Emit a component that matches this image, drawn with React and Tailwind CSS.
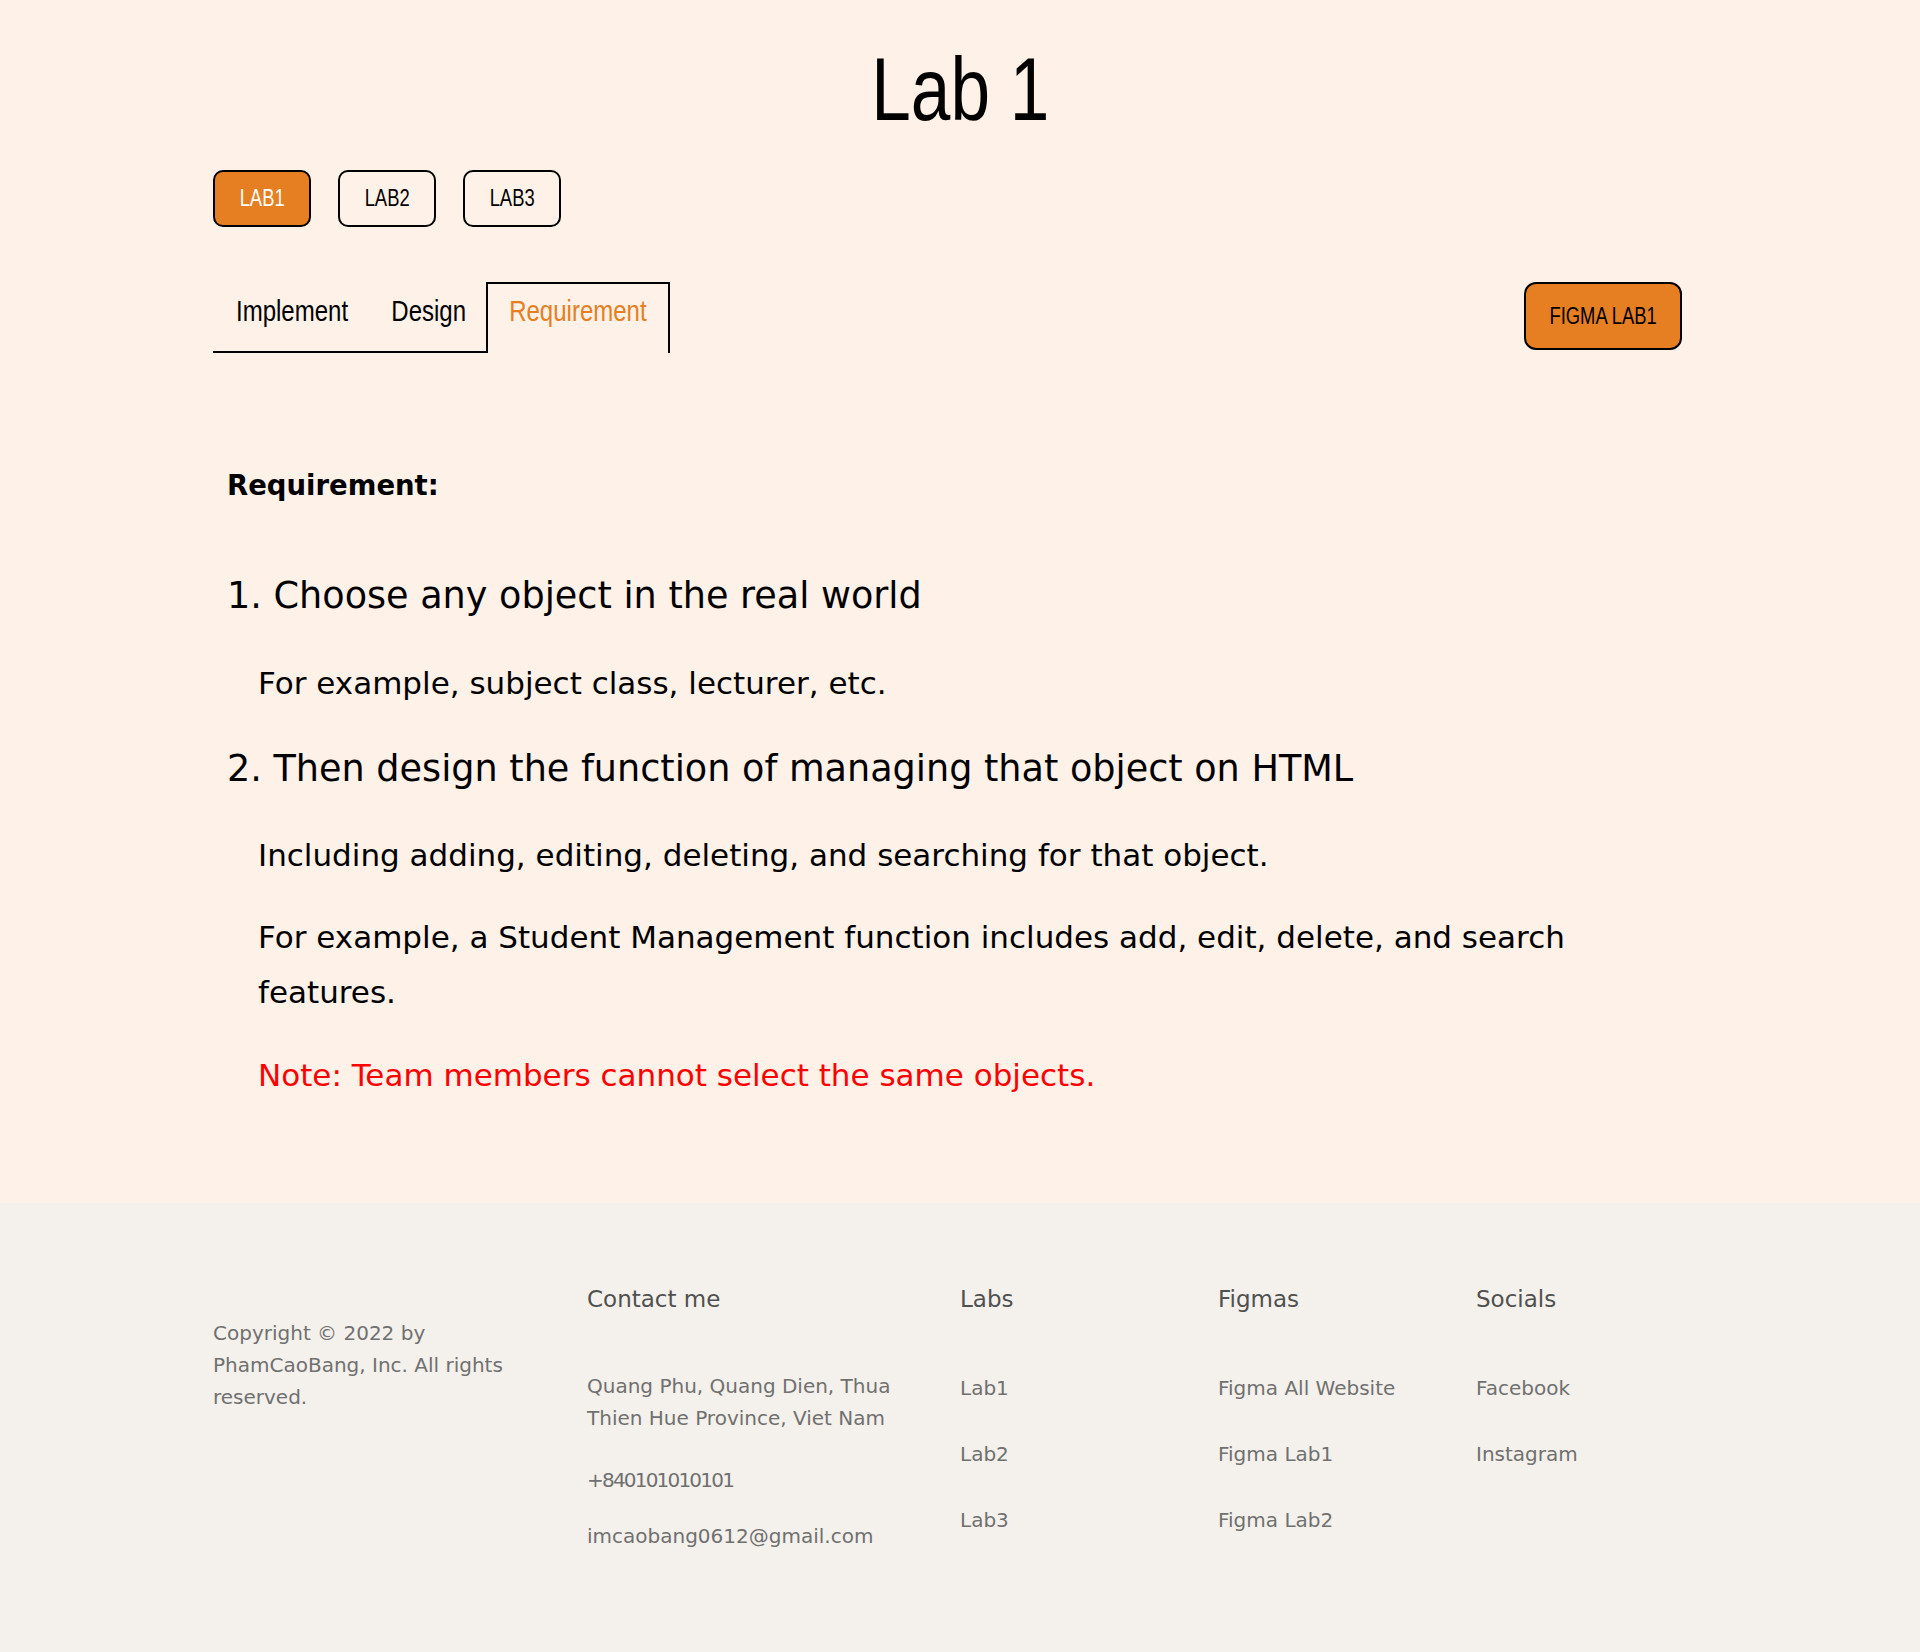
import React from 'react';

const hand = "font-['Liberation_Sans','Arial',sans-serif]";

const LABS = ['LAB1', 'LAB2', 'LAB3'];
const TABS = [
  { name: 'Implement', w: 'w-[159px]' },
  { name: 'Design', w: 'w-[114px]' },
  { name: 'Requirement', w: 'w-[184px]' },
];

// chu viet tay: thu hep chieu ngang cho giong font goc
function Hand({ children, className = '' }) {
  return <span className={`inline-block scale-x-[0.8] ${className}`}>{children}</span>;
}

function FooterCol({ title, items }) {
  return (
    <div className="flex flex-col">
      <h4 className="text-[23px] leading-[28px] text-[#505050]">{title}</h4>
      <ul className="mt-[59px] flex flex-col gap-[34px]">
        {items.map((it) => (
          <li key={it} className="text-[20px] leading-[32px] text-[#707070]">{it}</li>
        ))}
      </ul>
    </div>
  );
}

export default function App() {
  const activeLab = 'LAB1';
  const activeTab = 'Requirement';

  return (
    <div className="min-h-[1652px] bg-[#fdf1e8] flex flex-col font-['DejaVu_Sans',sans-serif] text-black">
      <main className="w-[1494px] mx-auto flex-1">
        {/* tieu de */}
        <h1 className={`${hand} text-center text-[89px] leading-none pt-[45px]`}>
          <span className="inline-block scale-x-[0.8]">Lab 1</span>
        </h1>

        {/* chon lab */}
        <div className="flex gap-[27px] mt-[36px]">
          {LABS.map((lab) => (
            <button
              key={lab}
              className={`${hand} w-[98px] h-[57px] rounded-[10px] border-2 border-black text-[23px] ${
                lab === activeLab ? 'bg-[#e67e22] text-white' : 'bg-transparent text-black'
              }`}
            >
              <Hand>{lab}</Hand>
            </button>
          ))}
        </div>

        {/* tabs + figma */}
        <div className="flex items-start justify-between mt-[55px]">
          <div className="flex">
            {TABS.map((tab) =>
              tab.name === activeTab ? (
                <div
                  key={tab.name}
                  className={`${hand} ${tab.w} h-[71px] pt-[12px] text-center border-2 border-b-0 border-black text-[30px] leading-none text-[#e67e22]`}
                >
                  <Hand>{tab.name}</Hand>
                </div>
              ) : (
                <div
                  key={tab.name}
                  className={`${hand} ${tab.w} h-[71px] pt-[14px] text-center border-b-2 border-black text-[30px] leading-none`}
                >
                  <Hand>{tab.name}</Hand>
                </div>
              )
            )}
          </div>
          <button
            className={`${hand} mr-[25px] w-[158px] h-[68px] rounded-[12px] border-2 border-black bg-[#e67e22] text-[23px] text-black`}
          >
            <Hand>FIGMA LAB1</Hand>
          </button>
        </div>

        {/* noi dung yeu cau */}
        <section className="pl-[14px]">
          <h3 className="mt-[116px] text-[27.5px] leading-[32px] font-bold">Requirement:</h3>
          <h2 className="mt-[73px] text-[36.6px] leading-[44px]">1. Choose any object in the real world</h2>
          <p className="mt-[47px] ml-[31px] text-[31px] leading-[36px]">For example, subject class, lecturer, etc.</p>
          <h2 className="mt-[46px] text-[36.6px] leading-[44px]">2. Then design the function of managing that object on HTML</h2>
          <p className="mt-[46px] ml-[31px] text-[31px] leading-[36px]">Including adding, editing, deleting, and searching for that object.</p>
          <p className="mt-[37px] ml-[31px] max-w-[1400px] text-[31px] leading-[55px]">
            For example, a Student Management function includes add, edit, delete, and search features.
          </p>
          <p className="mt-[37px] ml-[31px] text-[31px] leading-[36px] text-[#ff0000]">
            Note: Team members cannot select the same objects.
          </p>
        </section>
      </main>

      <footer className="bg-[#f4f0eb] h-[449px]">
        <div className="w-[1494px] mx-auto pt-[82px] grid grid-cols-[374px_373px_258px_258px_1fr]">
          <p className="mt-[32px] max-w-[300px] text-[20px] leading-[32px] text-[#707070]">
            Copyright © 2022 by PhamCaoBang, Inc. All rights reserved.
          </p>
          <div className="flex flex-col">
            <h4 className="text-[23px] leading-[28px] text-[#505050]">Contact me</h4>
            <p className="mt-[57px] max-w-[320px] text-[20px] leading-[32px] text-[#707070]">
              Quang Phu, Quang Dien, Thua Thien Hue Province, Viet Nam
            </p>
            <p className="mt-[30px] text-[20px] leading-[32px] tracking-[-1.8px] text-[#707070]">+840101010101</p>
            <p className="mt-[24px] text-[20px] leading-[32px] text-[#707070]">imcaobang0612@gmail.com</p>
          </div>
          <FooterCol title="Labs" items={['Lab1', 'Lab2', 'Lab3']} />
          <FooterCol title="Figmas" items={['Figma All Website', 'Figma Lab1', 'Figma Lab2']} />
          <FooterCol title="Socials" items={['Facebook', 'Instagram']} />
        </div>
      </footer>
    </div>
  );
}
